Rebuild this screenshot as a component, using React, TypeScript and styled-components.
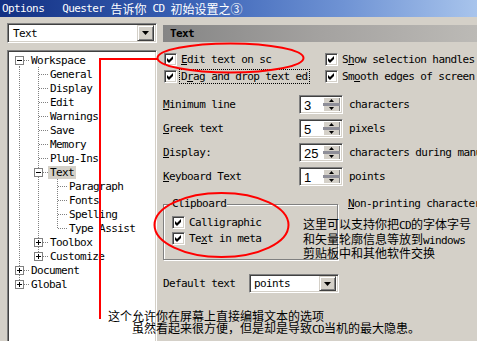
import React from "react";
import styled, { createGlobalStyle, css } from "styled-components";

const GlobalStyle = createGlobalStyle`
  html, body { margin: 0; padding: 0; background: #d4d0c8; }
  body {
    width: 477px; height: 341px; overflow: hidden;
    font-family: "DejaVu Sans Mono", "Liberation Mono", "Noto Sans CJK SC", monospace;
    font-size: 11px; letter-spacing: -0.6px; color: #000;
  }
`;

const sunken = css`
  box-sizing: border-box;
  border: 1px solid;
  border-color: #808080 #ffffff #ffffff #808080;
  box-shadow: inset 1px 1px #404040, inset -1px -1px #d4d0c8;
`;

const raised = css`
  box-sizing: border-box;
  border: 1px solid;
  border-color: #d4d0c8 #404040 #404040 #d4d0c8;
  box-shadow: inset 1px 1px #ffffff, inset -1px -1px #808080;
`;

const Page = styled.div`
  position: relative;
  width: 477px;
  height: 341px;
  overflow: hidden;
  display: flex;
  flex-direction: column;
  background: #d4d0c8;
`;

const TitleBar = styled.div`
  flex: none;
  height: 17px;
  display: flex;
  align-items: center;
  padding-left: 2px;
  color: #fff;
  white-space: pre;
  line-height: 14px;
  background: linear-gradient(to right, #123083 0%, #3a62b6 40%, #6f93d4 72%, #a8c4ec 100%);
`;

const Han = styled.span`
  font-family: "Noto Sans CJK SC", sans-serif;
  font-size: 12px;
  letter-spacing: 0;
`;

const Lat = styled.span`
  font-family: "DejaVu Sans Mono", monospace;
  font-size: 11px;
  letter-spacing: -0.6px;
`;

const Body = styled.div`
  flex: 1;
  min-height: 0;
  display: flex;
`;

const LeftCol = styled.div`
  flex: none;
  width: 150px;
  margin: 6px 0 0 7px;
  display: flex;
  flex-direction: column;
  gap: 7px;
`;

const RightCol = styled.div`
  flex: 1;
  min-width: 0;
  margin: 8px 0 0 6px;
  display: flex;
  flex-direction: column;
  white-space: nowrap;
`;

const Combo = styled.div<{ $w?: number; $h: number }>`
  ${sunken};
  flex: none;
  width: ${(p) => (p.$w ? `${p.$w}px` : "auto")};
  height: ${(p) => p.$h}px;
  background: #fff;
  display: flex;
  align-items: center;
  padding: 2px;
`;

const ComboText = styled.span<{ $pad: number }>`
  flex: 1;
  padding-left: ${(p) => p.$pad}px;
  line-height: 13px;
`;

const DropBtn = styled.div<{ $h: number }>`
  ${raised};
  flex: none;
  width: 17px;
  height: ${(p) => p.$h}px;
  background: #d4d0c8;
  display: flex;
  align-items: center;
  justify-content: center;
`;

const Tree = styled.div`
  ${sunken};
  flex: 1;
  margin-bottom: -12px;
  background: #fff;
  padding: 2px 1px 0 2px;
`;

const TreeRow = styled.div`
  display: flex;
  align-items: center;
  height: 14px;
  white-space: nowrap;
`;

const TreeLabel = styled.span<{ $selected?: boolean }>`
  padding: 0 2px;
  line-height: 13px;
  background: ${(p) => (p.$selected ? "#d4d0c8" : "transparent")};
`;

const CellSvg = styled.svg`
  flex: none;
  display: block;
`;

const Header = styled.div`
  flex: none;
  height: 17px;
  display: flex;
  align-items: center;
  padding-left: 7px;
  font-weight: bold;
  background: linear-gradient(to right, #858585 0%, #a4a2a0 50%, #bcbab6 100%);
`;

const CheckGrid = styled.div`
  display: grid;
  grid-template-columns: 161px 1fr;
  grid-auto-rows: 17px;
  margin-top: 9px;
  padding-left: 1px;
`;

const CheckRow = styled.div`
  display: flex;
  align-items: center;
  gap: 2px;
  overflow: hidden;
`;

const Box = styled.div`
  ${sunken};
  flex: none;
  width: 13px;
  height: 13px;
  background: #fff;
  display: flex;
  align-items: center;
  justify-content: center;
`;

const CheckText = styled.span<{ $focus?: boolean }>`
  padding: 0 1px;
  line-height: 13px;
  border: 1px dotted ${(p) => (p.$focus ? "#000" : "transparent")};
`;

const U = styled.span`
  text-decoration: underline;
`;

const SpinList = styled.div`
  margin-top: 7px;
  display: flex;
  flex-direction: column;
`;

const SpinRow = styled.div`
  display: grid;
  grid-template-columns: 130px 44px auto;
  column-gap: 6px;
  height: 24px;
  align-items: center;
`;

const SpinBox = styled.div`
  ${sunken};
  height: 19px;
  background: #fff;
  display: flex;
  padding: 2px;
`;

const SpinValue = styled.span`
  flex: 1;
  padding-left: 2px;
  font-family: "Liberation Sans", Arial, sans-serif;
  font-size: 13px;
  letter-spacing: 0;
  line-height: 15px;
`;

const SpinBtns = styled.div`
  flex: none;
  width: 17px;
  display: flex;
  flex-direction: column;
`;

const SpinBtn = styled.div<{ $down?: boolean }>`
  flex: 1;
  background: #d4d0c8;
  border-left: 1px solid #fff;
  border-right: 1px solid #808080;
  display: flex;
  justify-content: center;
  align-items: ${(p) => (p.$down ? "flex-end" : "flex-start")};
  padding: ${(p) => (p.$down ? "0 0 1px" : "1px 0 0")};
`;

const SpinBand = styled.div`
  flex: none;
  height: 3px;
  background: #8e8e98;
`;

const GroupRow = styled.div`
  display: flex;
  align-items: flex-start;
  margin-top: 10px;
`;

const Group = styled.fieldset`
  flex: none;
  box-sizing: border-box;
  width: 175px;
  height: 62px;
  margin: 0;
  padding: 4px 8px 0 8px;
  border: 1px solid #808080;
  box-shadow: inset 1px 1px #fff, 1px 1px #fff;
`;

const Legend = styled.legend`
  padding: 0 1px;
  margin-left: -1px;
  line-height: 12px;
  background: #d4d0c8;
`;

const GroupCheck = styled.div`
  display: flex;
  align-items: center;
  gap: 4px;
  height: 16px;
`;

const SideLabel = styled.span`
  margin-left: 10px;
  line-height: 12px;
`;

const DefaultRow = styled.div`
  display: flex;
  align-items: center;
  margin-top: 14px;
`;

const DefaultLabel = styled.span`
  flex: none;
  width: 86px;
  line-height: 13px;
`;

const Note = styled.div<{ $x: number; $y: number; $lh: number }>`
  position: absolute;
  left: ${(p) => p.$x}px;
  top: ${(p) => p.$y}px;
  font-family: "Noto Sans CJK SC", sans-serif;
  font-size: 12px;
  letter-spacing: 0;
  line-height: ${(p) => p.$lh}px;
  white-space: pre;
  color: #000;
`;

const NoteLine = styled.div<{ $indent?: number }>`
  padding-left: ${(p) => p.$indent || 0}px;
`;

const Overlay = styled.svg`
  position: absolute;
  left: 0;
  top: 0;
  pointer-events: none;
`;

const DownArrow = () => (
  <svg width="7" height="4" viewBox="0 0 7 4">
    <polygon points="0,0 7,0 3.5,4" fill="#000" />
  </svg>
);

const Tiny = ({ up }: { up?: boolean }) => (
  <svg width="5" height="3" viewBox="0 0 5 3">
    <polygon points={up ? "2.5,0 5,3 0,3" : "0,0 5,0 2.5,3"} fill="#000" />
  </svg>
);

const Check = () => (
  <svg width="7" height="7" viewBox="0 0 7 7">
    <path d="M0 2 L2 4 L6 0 L6 3 L2 7 L0 5 Z" fill="#000" />
  </svg>
);

const CheckBox = () => (
  <Box>
    <Check />
  </Box>
);

type Node = { label: string; open?: boolean; selected?: boolean; children?: Node[] };

const leaf = (label: string): Node => ({ label });

const TREE: Node[] = [
  {
    label: "Workspace",
    open: true,
    children: [
      leaf("General"),
      leaf("Display"),
      leaf("Edit"),
      leaf("Warnings"),
      leaf("Save"),
      leaf("Memory"),
      leaf("Plug-Ins"),
      {
        label: "Text",
        open: true,
        selected: true,
        children: [leaf("Paragraph"), leaf("Fonts"), leaf("Spelling"), leaf("Type Assist")],
      },
      { label: "Toolbox", children: [leaf("x")] },
      { label: "Customize", children: [leaf("x")] },
    ],
  },
  { label: "Document", children: [leaf("x")] },
  { label: "Global", children: [leaf("x")] },
];

type Row = { node: Node; guides: boolean[]; first: boolean; last: boolean };

function flatten(nodes: Node[], level: number, guides: boolean[], out: Row[]) {
  nodes.forEach((n, i) => {
    const last = i === nodes.length - 1;
    out.push({ node: n, guides, first: level === 0 && i === 0, last });
    if (n.open && n.children) flatten(n.children, level + 1, [...guides, !last], out);
  });
}

const Guide = ({ line }: { line: boolean }) => (
  <CellSvg width="19" height="14" viewBox="0 0 19 14">
    {line && <line x1="9.5" y1="0" x2="9.5" y2="14" stroke="#808080" strokeDasharray="1 1" />}
  </CellSvg>
);

const Connector = ({ row }: { row: Row }) => {
  const { node, first, last } = row;
  const hasKids = !!node.children;
  return (
    <CellSvg width="19" height="14" viewBox="0 0 19 14">
      <line
        x1="9.5"
        y1={first ? 7 : 0}
        x2="9.5"
        y2={last ? 8 : 14}
        stroke="#808080"
        strokeDasharray="1 1"
      />
      <line x1="10" y1="7.5" x2="19" y2="7.5" stroke="#808080" strokeDasharray="1 1" />
      {hasKids && (
        <g>
          <rect x="5.5" y="3.5" width="8" height="8" fill="#fff" stroke="#808080" />
          <line x1="7" y1="7.5" x2="12" y2="7.5" stroke="#000" />
          {!node.open && <line x1="9.5" y1="5" x2="9.5" y2="10" stroke="#000" />}
        </g>
      )}
    </CellSvg>
  );
};

const ROWS: Row[] = [];
flatten(TREE, 0, [], ROWS);

const SPINS = [
  { label: "Minimum line", m: "M", value: "3", unit: "characters" },
  { label: "Greek text", m: "G", value: "5", unit: "pixels" },
  { label: "Display:", m: "D", value: "25", unit: "characters during manual kerning" },
  { label: "Keyboard Text", m: "K", value: "1", unit: "points" },
];

const Mn = ({ text, m }: { text: string; m: string }) => {
  const i = text.indexOf(m);
  return (
    <>
      {text.slice(0, i)}
      <U>{m}</U>
      {text.slice(i + 1)}
    </>
  );
};

export default function App() {
  return (
    <Page>
      <GlobalStyle />
      <TitleBar>
        {"Options   Quester "}
        <Han>告诉你</Han>
        {" CD "}
        <Han>初始设置之③</Han>
      </TitleBar>
      <Body>
        <LeftCol>
          <Combo $w={150} $h={20}>
            <ComboText $pad={3}>Text</ComboText>
            <DropBtn $h={16}>
              <DownArrow />
            </DropBtn>
          </Combo>
          <Tree>
            {ROWS.map((r, i) => (
              <TreeRow key={i}>
                {r.guides.map((g, j) => (
                  <Guide key={j} line={g} />
                ))}
                <Connector row={r} />
                <TreeLabel $selected={r.node.selected}>{r.node.label}</TreeLabel>
              </TreeRow>
            ))}
          </Tree>
        </LeftCol>
        <RightCol>
          <Header>Text</Header>
          <CheckGrid>
            <CheckRow>
              <CheckBox />
              <CheckText>
                <Mn text="Edit text on sc" m="E" />
              </CheckText>
            </CheckRow>
            <CheckRow>
              <CheckBox />
              <CheckText>
                <Mn text="Show selection handles" m="h" />
              </CheckText>
            </CheckRow>
            <CheckRow>
              <CheckBox />
              <CheckText $focus>
                <Mn text="Drag and drop text ed" m="r" />
              </CheckText>
            </CheckRow>
            <CheckRow>
              <CheckBox />
              <CheckText>
                <Mn text="Smooth edges of screen" m="o" />
              </CheckText>
            </CheckRow>
          </CheckGrid>
          <SpinList>
            {SPINS.map((s) => (
              <SpinRow key={s.label}>
                <span>
                  <Mn text={s.label} m={s.m} />
                </span>
                <SpinBox>
                  <SpinValue>{s.value}</SpinValue>
                  <SpinBtns>
                    <SpinBtn>
                      <Tiny up />
                    </SpinBtn>
                    <SpinBand />
                    <SpinBtn $down>
                      <Tiny />
                    </SpinBtn>
                  </SpinBtns>
                </SpinBox>
                <span>{s.unit}</span>
              </SpinRow>
            ))}
          </SpinList>
          <GroupRow>
            <Group>
              <Legend>Clipboard</Legend>
              <GroupCheck>
                <CheckBox />
                <span>Calligraphic</span>
              </GroupCheck>
              <GroupCheck>
                <CheckBox />
                <span>
                  <Mn text="Text in meta" m="x" />
                </span>
              </GroupCheck>
            </Group>
            <SideLabel>
              <Mn text="Non-printing characters" m="N" />
            </SideLabel>
          </GroupRow>
          <DefaultRow>
            <DefaultLabel>Default text</DefaultLabel>
            <Combo $w={90} $h={19}>
              <ComboText $pad={2}>points</ComboText>
              <DropBtn $h={15}>
                <DownArrow />
              </DropBtn>
            </Combo>
          </DefaultRow>
        </RightCol>
      </Body>

      <Note $x={303} $y={218} $lh={12.5}>
        <NoteLine>
          这里可以支持你把<Lat>CD</Lat>的字体字号
        </NoteLine>
        <NoteLine>
          和矢量轮廓信息等放到<Lat>windows</Lat>
        </NoteLine>
        <NoteLine>剪贴板中和其他软件交换</NoteLine>
      </Note>

      <Note $x={108} $y={310} $lh={12}>
        <NoteLine>这个允许你在屏幕上直接编辑文本的选项</NoteLine>
        <NoteLine $indent={24}>
          虽然看起来很方便，但是却是导致<Lat>CD</Lat>当机的最大隐患。
        </NoteLine>
      </Note>

      <Overlay width="477" height="341" viewBox="0 0 477 341">
        <path d="M100 319 V59 H157.5" fill="none" stroke="#ff0000" strokeWidth="2" />
        <ellipse cx="230.5" cy="58" rx="73" ry="14.5" fill="none" stroke="#ff0000" strokeWidth="2" />
        <ellipse cx="221.5" cy="225" rx="67" ry="32" fill="none" stroke="#ff0000" strokeWidth="2" />
      </Overlay>
    </Page>
  );
}
